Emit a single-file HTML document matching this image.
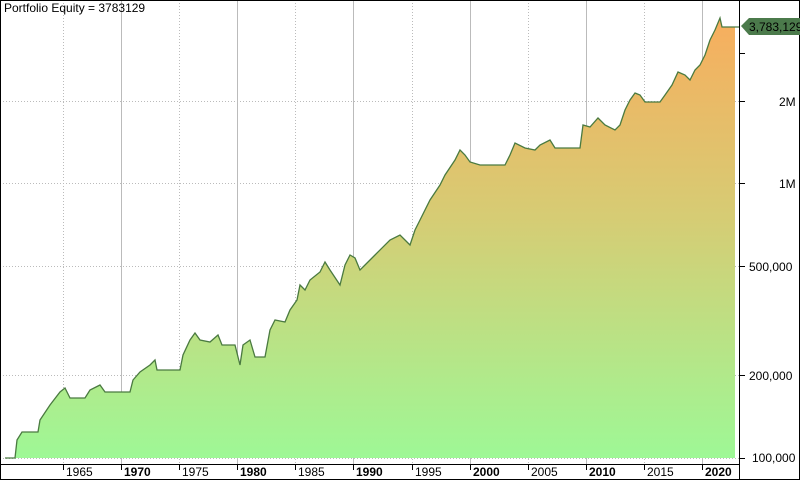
<!DOCTYPE html><html><head><style>body{margin:0}svg{display:block}text{font-family:"Liberation Sans",sans-serif;font-size:12px;fill:#000}</style></head><body>
<svg width="800" height="480" viewBox="0 0 800 480">
<defs><linearGradient id="g" x1="0" y1="20" x2="0" y2="458" gradientUnits="userSpaceOnUse"><stop offset="0" stop-color="#f7ae5e"/><stop offset="0.45" stop-color="#d6cc74"/><stop offset="1" stop-color="#9ef896"/></linearGradient></defs>
<rect width="800" height="480" fill="#fff"/>
<g stroke="#bbb" stroke-width="1">
<line x1="121.5" y1="0" x2="121.5" y2="464"/><line x1="237.5" y1="0" x2="237.5" y2="464"/><line x1="353.5" y1="0" x2="353.5" y2="464"/><line x1="470.5" y1="0" x2="470.5" y2="464"/><line x1="586.5" y1="0" x2="586.5" y2="464"/><line x1="702.5" y1="0" x2="702.5" y2="464"/>
</g>
<g stroke="#bbb" stroke-width="1" stroke-dasharray="1,2">
<line x1="63.5" y1="0" x2="63.5" y2="464"/><line x1="179.5" y1="0" x2="179.5" y2="464"/><line x1="295.5" y1="0" x2="295.5" y2="464"/><line x1="412.5" y1="0" x2="412.5" y2="464"/><line x1="528.5" y1="0" x2="528.5" y2="464"/><line x1="644.5" y1="0" x2="644.5" y2="464"/>
<line x1="0" y1="458.5" x2="739" y2="458.5"/><line x1="0" y1="375.5" x2="739" y2="375.5"/><line x1="0" y1="266.5" x2="739" y2="266.5"/><line x1="0" y1="183.5" x2="739" y2="183.5"/><line x1="0" y1="101.5" x2="739" y2="101.5"/>
</g>
<polygon fill="url(#g)" points="15,458 17,440 22,432 38,432 40,420 50,405 60,392 65,388 70,398 85,398 90,390 100,385 105,392 130,392 133,380 140,372 150,365 155,360 157,370 180,370 183,355 190,340 195,333 200,340 210,342 218,335 222,345 235,345 240,365 243,345 250,340 255,357 265,357 270,330 275,320 285,322 290,310 297,300 300,285 305,290 310,280 320,272 325,262 330,270 340,285 345,265 350,255 355,258 360,270 365,265 375,255 390,240 400,235 405,240 410,245 415,230 420,220 430,200 440,185 445,175 455,160 460,150 465,155 470,162 480,165 505,165 510,155 515,143 525,148 535,150 540,145 550,140 555,148 580,148 583,125 590,127 598,118 605,125 615,130 620,125 625,110 630,100 635,93 640,95 645,102 660,102 665,95 672,85 678,72 685,75 690,80 695,70 700,65 705,55 710,40 715,30 720,18 722,27 735,27 735,458"/>
<polyline fill="none" stroke="#4a7a40" stroke-width="1.3" points="5,458 15,458 17,440 22,432 38,432 40,420 50,405 60,392 65,388 70,398 85,398 90,390 100,385 105,392 130,392 133,380 140,372 150,365 155,360 157,370 180,370 183,355 190,340 195,333 200,340 210,342 218,335 222,345 235,345 240,365 243,345 250,340 255,357 265,357 270,330 275,320 285,322 290,310 297,300 300,285 305,290 310,280 320,272 325,262 330,270 340,285 345,265 350,255 355,258 360,270 365,265 375,255 390,240 400,235 405,240 410,245 415,230 420,220 430,200 440,185 445,175 455,160 460,150 465,155 470,162 480,165 505,165 510,155 515,143 525,148 535,150 540,145 550,140 555,148 580,148 583,125 590,127 598,118 605,125 615,130 620,125 625,110 630,100 635,93 640,95 645,102 660,102 665,95 672,85 678,72 685,75 690,80 695,70 700,65 705,55 710,40 715,30 720,18 722,27 740,27"/>
<line x1="739.5" y1="0" x2="739.5" y2="480" stroke="#000"/>
<line x1="0" y1="464.5" x2="740" y2="464.5" stroke="#000"/>
<rect x="0.5" y="0.5" width="799" height="479" fill="none" stroke="#000"/>
<g stroke="#000"><line x1="740" y1="458.5" x2="745" y2="458.5"/><line x1="740" y1="375.5" x2="745" y2="375.5"/><line x1="740" y1="266.5" x2="745" y2="266.5"/><line x1="740" y1="183.5" x2="745" y2="183.5"/><line x1="740" y1="101.5" x2="745" y2="101.5"/><line x1="740" y1="53.5" x2="745" y2="53.5"/>
<line x1="63.5" y1="464" x2="63.5" y2="470"/><line x1="121.5" y1="464" x2="121.5" y2="470"/><line x1="179.5" y1="464" x2="179.5" y2="470"/><line x1="237.5" y1="464" x2="237.5" y2="470"/><line x1="295.5" y1="464" x2="295.5" y2="470"/><line x1="353.5" y1="464" x2="353.5" y2="470"/><line x1="412.5" y1="464" x2="412.5" y2="470"/><line x1="470.5" y1="464" x2="470.5" y2="470"/><line x1="528.5" y1="464" x2="528.5" y2="470"/><line x1="586.5" y1="464" x2="586.5" y2="470"/><line x1="644.5" y1="464" x2="644.5" y2="470"/><line x1="702.5" y1="464" x2="702.5" y2="470"/></g>
<text x="66" y="476">1965</text><text x="124" y="476" font-weight="bold">1970</text><text x="182" y="476">1975</text><text x="240" y="476" font-weight="bold">1980</text><text x="298" y="476">1985</text><text x="356" y="476" font-weight="bold">1990</text><text x="415" y="476">1995</text><text x="473" y="476" font-weight="bold">2000</text><text x="531" y="476">2005</text><text x="589" y="476" font-weight="bold">2010</text><text x="647" y="476">2015</text><text x="705" y="476" font-weight="bold">2020</text>
<text x="752" y="462">100,000</text><text x="749" y="380">200,000</text><text x="749" y="271">500,000</text><text x="779" y="188">1M</text><text x="779" y="106">2M</text>
<polygon points="741,26 749,18 800,18 800,35 749,35" fill="#4b7a4b"/>
<text x="749" y="31">3,783,129</text>
<text x="4" y="12">Portfolio Equity = 3783129</text>
</svg></body></html>
